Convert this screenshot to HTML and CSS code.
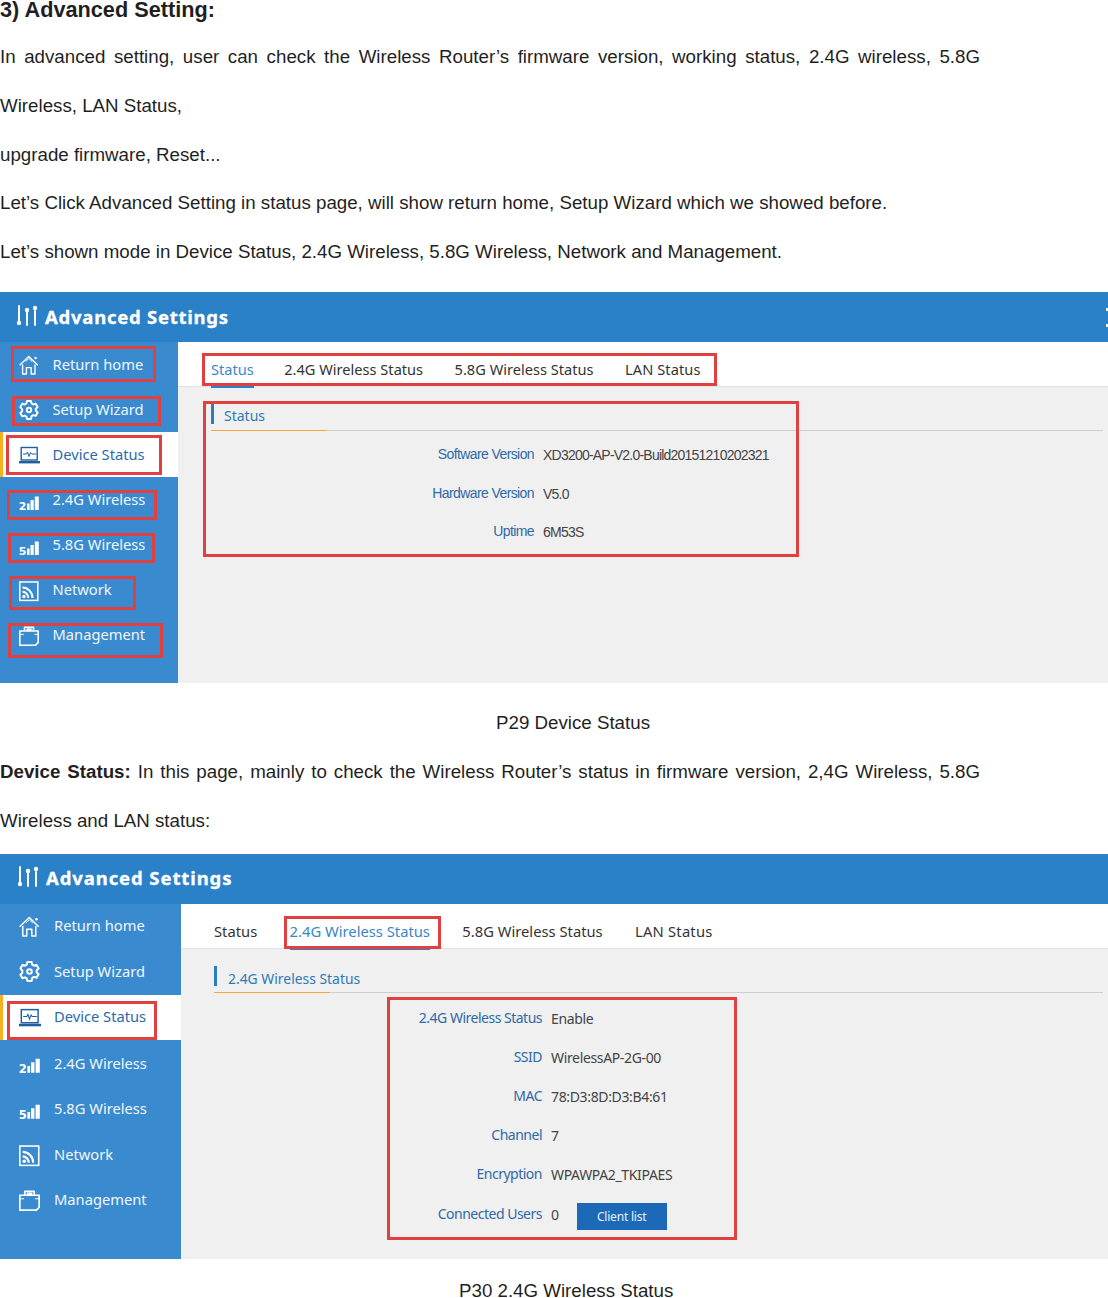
FILE: index.html
```html
<!DOCTYPE html>
<html lang="en">
<head>
<meta charset="utf-8">
<title>Advanced Setting</title>
<link rel="stylesheet" href="styles.css">
</head>
<body>
<article class="doc">
  <h3 class="doc-title">3) Advanced Setting:</h3>
  <p class="para just">In advanced setting, user can check the Wireless Router’s firmware version, working status, 2.4G wireless, 5.8G Wireless, LAN Status,</p>
  <p class="para">upgrade firmware, Reset...</p>
  <p class="para">Let’s Click Advanced Setting in status page, will show return home, Setup Wizard which we showed before.</p>
  <p class="para">Let’s shown mode in Device Status, 2.4G Wireless, 5.8G Wireless, Network and Management.</p>

  <figure class="shot shot-a">
    <header class="shot-head">
      <svg class="head-icon" viewBox="0 0 22 22"><use href="#i-sliders"/></svg>
      <span>Advanced Settings</span>
      <i class="edge-dots"></i>
    </header>
    <div class="shot-body">
      <nav class="side">
        <a class="item"><svg class="ico" viewBox="0 0 20 20"><use href="#i-home"/></svg><span>Return home</span></a>
        <a class="item"><svg class="ico" viewBox="0 0 20 20"><use href="#i-gear"/></svg><span>Setup Wizard</span></a>
        <a class="item on"><svg class="ico" viewBox="0 0 20 20"><use href="#i-device"/></svg><span>Device Status</span></a>
        <a class="item"><svg class="ico low" viewBox="0 0 20 20"><use href="#i-s2"/></svg><span>2.4G Wireless</span></a>
        <a class="item"><svg class="ico low" viewBox="0 0 20 20"><use href="#i-s5"/></svg><span>5.8G Wireless</span></a>
        <a class="item"><svg class="ico low2" viewBox="0 0 20 20"><use href="#i-net"/></svg><span>Network</span></a>
        <a class="item"><svg class="ico low2" viewBox="0 0 20 20"><use href="#i-mgmt"/></svg><span>Management</span></a>
      </nav>
      <main class="main">
        <div class="tabs">
          <span class="tab cur">Status</span>
          <span class="tab">2.4G Wireless Status</span>
          <span class="tab">5.8G Wireless Status</span>
          <span class="tab tab-lan">LAN Status</span>
        </div>
        <div class="pane">
          <h4 class="pane-title"><span>Status</span></h4>
          <dl class="rows">
            <div class="row"><dt>Software Version</dt><dd>XD3200-AP-V2.0-Build20151210202321</dd></div>
            <div class="row"><dt>Hardware Version</dt><dd>V5.0</dd></div>
            <div class="row"><dt>Uptime</dt><dd>6M53S</dd></div>
          </dl>
        </div>
      </main>
    </div>
    <i class="mark m1"></i><i class="mark m2"></i><i class="mark m3"></i><i class="mark m4"></i><i class="mark m5"></i><i class="mark m6"></i><i class="mark m7"></i><i class="mark m8"></i><i class="mark m9"></i>
  </figure>
  <p class="caption cap-a">P29 Device Status</p>

  <p class="para just"><b>Device Status:</b> In this page, mainly to check the Wireless Router’s status in firmware version, 2,4G Wireless, 5.8G Wireless and LAN status:</p>

  <figure class="shot shot-b">
    <header class="shot-head">
      <svg class="head-icon" viewBox="0 0 22 22"><use href="#i-sliders"/></svg>
      <span>Advanced Settings</span>
    </header>
    <div class="shot-body">
      <nav class="side">
        <a class="item"><svg class="ico" viewBox="0 0 20 20"><use href="#i-home"/></svg><span>Return home</span></a>
        <a class="item"><svg class="ico" viewBox="0 0 20 20"><use href="#i-gear"/></svg><span>Setup Wizard</span></a>
        <a class="item on"><svg class="ico" viewBox="0 0 20 20"><use href="#i-device"/></svg><span>Device Status</span></a>
        <a class="item"><svg class="ico low" viewBox="0 0 20 20"><use href="#i-s2"/></svg><span>2.4G Wireless</span></a>
        <a class="item"><svg class="ico low" viewBox="0 0 20 20"><use href="#i-s5"/></svg><span>5.8G Wireless</span></a>
        <a class="item"><svg class="ico low2" viewBox="0 0 20 20"><use href="#i-net"/></svg><span>Network</span></a>
        <a class="item"><svg class="ico low2" viewBox="0 0 20 20"><use href="#i-mgmt"/></svg><span>Management</span></a>
      </nav>
      <main class="main">
        <div class="tabs">
          <span class="tab">Status</span>
          <span class="tab cur">2.4G Wireless Status</span>
          <span class="tab">5.8G Wireless Status</span>
          <span class="tab">LAN Status</span>
        </div>
        <div class="pane">
          <h4 class="pane-title"><span>2.4G Wireless Status</span></h4>
          <dl class="rows">
            <div class="row"><dt>2.4G Wireless Status</dt><dd>Enable</dd></div>
            <div class="row"><dt>SSID</dt><dd>WirelessAP-2G-00</dd></div>
            <div class="row"><dt>MAC</dt><dd>78:D3:8D:D3:B4:61</dd></div>
            <div class="row"><dt>Channel</dt><dd>7</dd></div>
            <div class="row"><dt>Encryption</dt><dd>WPAWPA2_TKIPAES</dd></div>
            <div class="row"><dt>Connected Users</dt><dd class="with-btn">0<button class="btn">Client list</button></dd></div>
          </dl>
        </div>
      </main>
    </div>
    <i class="mark n1"></i><i class="mark n2"></i><i class="mark n3"></i>
  </figure>
  <p class="caption cap-b">P30 2.4G Wireless Status</p>
</article>

<svg class="defs" width="0" height="0" aria-hidden="true">
  <defs>
    <g id="i-sliders"><g fill="none" stroke="#fff" stroke-width="2" stroke-linecap="round"><path d="M3 1v15"/><path d="M11 7v13"/><path d="M19 6v14"/></g><g fill="#fff"><circle cx="3" cy="18" r="2.2"/><circle cx="11" cy="5" r="2.2"/><circle cx="19" cy="3" r="2.2"/></g></g>
    <g id="i-home" fill="none" stroke="currentColor" stroke-width="1.4" stroke-linejoin="round"><path d="M.6 10.200 9.800 1.400l9 8.800"/><path d="M3.600 9.600v9.400h3.800v-6.400h4.800V19H16V9.600"/><path d="M6.600 6.600 9.800 3.600l3.400 3.200" stroke-width=".9"/><circle cx="16.600" cy="3" r="1.200" fill="currentColor" stroke="none"/></g>
    <g id="i-gear" fill="none" stroke="currentColor" stroke-width="1.900" stroke-linejoin="round"><path d="M8 1h4l.6 2.500 1.700 1 2.400-.8 2 3.400-1.900 1.700v2l1.900 1.700-2 3.400-2.400-.8-1.700 1L12 19H8l-.6-2.400-1.700-1-2.400.8-2-3.400 1.900-1.700v-2L1.300 7.100l2-3.400 2.400.8 1.700-1z"/><circle cx="10" cy="10" r="2.200"/></g>
    <g id="i-device" fill="none" stroke="currentColor"><rect x="2.200" y="2.500" width="16" height="12.500" stroke-width="1.400"/><path d="M0 17.200h21" stroke-width="2.400"/><path d="M4 9h3.500l1-2 1.500 4.500 1.500-4 1 1.500H17" stroke-width="1"/></g>
    <g id="i-s2" fill="currentColor"><text x="-.3" y="17" font-family="DejaVu Sans, sans-serif" font-weight="700" font-size="11">2</text><path d="M8 10.500h2.600V17H8zM11.500 7h3.200v10h-3.200zM15.800 3.500h4V17h-4z"/></g>
    <g id="i-s5" fill="currentColor"><text x="-.3" y="17" font-family="DejaVu Sans, sans-serif" font-weight="700" font-size="11">5</text><path d="M8 10.500h2.600V17H8zM11.500 7h3.200v10h-3.200zM15.800 3.500h4V17h-4z"/></g>
    <g id="i-net" fill="none" stroke="currentColor" stroke-width="1.500"><rect x=".8" y="1" width="18" height="18.400"/><path d="M3.500 6.500c5.500 0 10 4.800 10 10.500" stroke-width="2"/><path d="M3.500 10.800c3.200 0 5.800 2.800 5.800 6.200" stroke-width="2"/><circle cx="5" cy="15.500" r="1.700" fill="currentColor" stroke="none"/></g>
    <g id="i-mgmt" fill="none" stroke="currentColor" stroke-width="1.600" stroke-linejoin="round"><path d="M.8 5v14.200h15.800l2.600-2.800V5z"/><path d="M5.500 5V1.300h9V5"/><path d="M7.500 3.600h5.200" stroke-width="2.400"/><path d="M.8 8.400h4M15.500 8.400h3.700" stroke-width="1"/></g>
  </defs>
</svg>
</body>
</html>
```
FILE: styles.css
```css
* { box-sizing: border-box; }
html, body { margin: 0; padding: 0; background: #fff; }
body { font-family: "Liberation Sans", Arial, sans-serif; color: #1f1f1f; overflow-x: hidden; }
.doc { width: 1108px; height: 1298px; overflow: hidden; }
.doc-title { margin: 0; font-size: 21.700px; line-height: 19px; font-weight: 700; height: 32.700px; }
.para { margin: 0; width: 980px; font-size: 18.730px; line-height: 48.900px; }
.just { text-align: justify; }
.defs { position: absolute; }

.shot { margin: 0; position: relative; width: 1108px; overflow: hidden; font-family: "Noto Sans", sans-serif; }
.shot-a { margin-top: 14.800px; height: 391px; }
.shot-b { margin-top: 8px; height: 405px; }
.shot-head { height: 50px; background: #2b81c8; color: #fff; display: flex; align-items: center; font-weight: 700; font-size: 18.500px; letter-spacing: .75px; -webkit-text-stroke: .3px #fff; padding-left: 16px; gap: 7px; position: relative; }
.shot-head span { position: relative; top: -1px; }
.shot-b .shot-head { padding-left: 17px; letter-spacing: .9px; }
.head-icon { width: 22px; height: 22px; margin-top: -3px; }
.edge-dots { position: absolute; right: 0; top: 16px; width: 2px; height: 3px; background: #fff; box-shadow: 0 16px 0 #fff; }
.shot-body { display: flex; height: calc(100% - 50px); }
.side { width: 178px; background: #3a8acf; flex: none; color: #fff; }
.shot-b .side { width: 181px; }
.item { height: 45px; display: flex; align-items: center; padding-left: 19px; gap: 14px; font-size: 14.700px; color: #f1f7fc; }
.item span { position: relative; top: -1px; }
.shot-a .item { gap: 13.500px; }
.shot-b .item { height: 45.500px; }
.shot-b .item .ico { width: 21px; height: 21px; }
.shot-b .item:nth-child(n+4) span { top: 0; }
.item.on { background: #fff; color: #2a6aa9; border-left: 3px solid #f5b21e; padding-left: 16px; }
.ico { width: 20px; height: 20px; flex: none; color: #fff; overflow: visible; }
.item.on .ico { color: #1f5f9f; }
.low { margin-top: 6px; }
.low2 { margin-top: 3px; }

.main { flex: 1; background: #f0f0f0; min-width: 0; }
.tabs { height: 45px; background: #fff; border-bottom: 1px solid #e3e3e3; display: flex; padding: 0 0 0 33px; gap: 31.500px; font-size: 14.600px; color: #333; }
.tab { display: flex; align-items: center; padding-top: 9px; height: 45px; position: relative; }
.shot-a .tab:first-child { margin-right: -1px; }
.tab-lan { letter-spacing: .1px; }
.tab.cur { color: #3b86c6; }
.tab.cur::after { content: ""; position: absolute; left: 0; right: 0; bottom: -1px; height: 2px; background: #2b81c8; }
.pane { padding: 17px 5px 0 33px; }
.pane-title { margin: 0; height: 27px; font-size: 14px; font-weight: 400; color: #2f78b8; border-bottom: 1px solid #cfcfcf; position: relative; }
.pane-title span { display: block; height: 20px; line-height: 24px; border-left: 3px solid #2b7cc0; padding-left: 10px; }
.pane-title::after { content: ""; position: absolute; left: 0; bottom: -1px; width: 116px; height: 1px; background: #f4a93a; }
.rows { margin: 0; padding-top: 13px; }
.row { display: flex; height: 38.500px; font-family: "Liberation Sans", sans-serif; font-size: 14px; letter-spacing: -.6px; line-height: 20px; }
.row dt { width: 323px; text-align: right; color: #2f69a8; }
.row dd { margin: 0 0 0 9px; color: #444; position: relative; top: 1px; letter-spacing: -.78px; }

.shot-b .tabs { padding-left: 33px; gap: 32.400px; font-size: 14.750px; }
.shot-b .tab:last-child { letter-spacing: .2px; }
.shot-b .pane-title { font-size: 13.900px; }
.shot-b .pane-title span { padding-left: 11px; line-height: 26px; }
.shot-b .rows { padding-top: 15px; }
.shot-b .row { height: 39.200px; font-family: "Noto Sans", sans-serif; letter-spacing: -.5px; }
.shot-b .row dt { width: 328px; }
.shot-b .row dd { letter-spacing: -.35px; }
.with-btn { display: flex; align-items: flex-start; }
.btn { margin: -2px 0 0 18px; width: 90px; height: 27px; border: 0; padding: 0; background: #1b69b7; color: #e8f2fb; font: 12px "Noto Sans", sans-serif; letter-spacing: -.2px; }

.caption { margin: 0; font-size: 18.730px; }
.cap-a { line-height: 48.900px; margin-top: 16px; padding-left: 496px; }
.cap-b { line-height: 14px; margin-top: 25px; padding-left: 459px; }

.mark { position: absolute; border: 3px solid #e0403f; pointer-events: none; }
.m1 { left: 11px; top: 54px; width: 145px; height: 36px; }
.m2 { left: 12px; top: 104px; width: 149px; height: 30px; }
.m3 { left: 6px; top: 143px; width: 156px; height: 40px; }
.m4 { left: 7px; top: 198px; width: 150px; height: 30px; }
.m5 { left: 8px; top: 241px; width: 147px; height: 30px; }
.m6 { left: 9px; top: 284px; width: 127px; height: 34px; }
.m7 { left: 8px; top: 331px; width: 155px; height: 35px; }
.m8 { left: 202px; top: 61px; width: 515px; height: 33px; }
.m9 { left: 203px; top: 109px; width: 596px; height: 156px; }
.n1 { left: 7px; top: 147px; width: 150px; height: 39px; }
.n2 { left: 284px; top: 62px; width: 157px; height: 33px; }
.n3 { left: 387px; top: 143px; width: 350px; height: 243px; }
```
